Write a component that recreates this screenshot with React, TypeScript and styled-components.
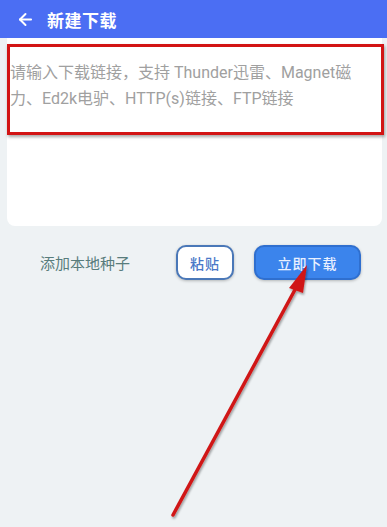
import React from 'react';
import styled, { createGlobalStyle } from 'styled-components';
import { ArrowLeft } from 'lucide-react';

const GlobalStyle = createGlobalStyle`
  body {
    margin: 0;
    font-family: Roboto, "Noto Sans CJK SC", sans-serif;
  }
`;

const Page = styled.div`
  position: relative;
  width: 387px;
  height: 527px;
  background: #eef2f4;
  overflow: hidden;
`;

const Header = styled.header`
  height: 38px;
  background: #4b6ef3;
  display: flex;
  align-items: center;
  gap: 12px;
  padding-left: 16px;
  color: #fff;
`;

const Title = styled.h1`
  margin: 0;
  font-size: 17px;
  font-weight: 700;
  letter-spacing: 0.5px;
`;

const Card = styled.div`
  position: relative;
  margin: 0 5px 0 7px;
  height: 188px;
  background: #fff;
  border-radius: 0 0 8px 8px;
  box-sizing: border-box;
  padding: 22px 0 0 3px;
`;

const LinkInput = styled.textarea`
  display: block;
  width: 100%;
  height: 150px;
  border: none;
  outline: none;
  resize: none;
  padding: 0;
  background: transparent;
  font-family: Roboto, "Noto Sans CJK SC", sans-serif;
  font-size: 16px;
  line-height: 26px;
  color: #333;

  &::placeholder {
    color: #a0a0a0;
  }
`;

const Highlight = styled.div`
  position: absolute;
  left: 0;
  right: -2px;
  top: 6px;
  height: 85px;
  border: 3px solid #d21414;
  box-shadow: 1px 2px 3px rgba(0, 0, 0, 0.35);
  pointer-events: none;
`;

const Actions = styled.div`
  display: flex;
  align-items: center;
  margin-top: 19px;
  height: 35px;
`;

const SeedLink = styled.span`
  margin-left: 40px;
  width: 136px;
  font-size: 15px;
  color: #587c7c;
`;

const Button = styled.button<{ $primary?: boolean }>`
  box-sizing: border-box;
  height: 35px;
  width: ${({ $primary }) => ($primary ? '107px' : '58px')};
  margin-right: ${({ $primary }) => ($primary ? '0' : '20px')};
  border-radius: 10px;
  border: 2px solid ${({ $primary }) => ($primary ? '#2f6fcf' : '#4a78b8')};
  background: ${({ $primary }) => ($primary ? '#3b84ec' : '#fff')};
  color: ${({ $primary }) => ($primary ? '#e8f0ff' : '#4a78c8')};
  font-family: Roboto, "Noto Sans CJK SC", sans-serif;
  font-size: 14px;
  font-weight: 500;
  letter-spacing: 1px;
  box-shadow: 0 1px 3px rgba(0, 0, 0, 0.25);
  padding: 0;
`;

const Pointer = styled.svg`
  position: absolute;
  left: 0;
  top: 0;
  pointer-events: none;
`;

const App: React.FC = () => (
  <Page>
    <GlobalStyle />
    <Header>
      <ArrowLeft size={19} strokeWidth={2.5} />
      <Title>新建下载</Title>
    </Header>
    <Card>
      <LinkInput placeholder="请输入下载链接，支持 Thunder迅雷、Magnet磁力、Ed2k电驴、HTTP(s)链接、FTP链接" />
      <Highlight />
    </Card>
    <Actions>
      <SeedLink>添加本地种子</SeedLink>
      <Button>粘贴</Button>
      <Button $primary>立即下载</Button>
    </Actions>
    <Pointer width="387" height="527" viewBox="0 0 387 527">
      <defs>
        <filter id="sh" x="-20%" y="-20%" width="140%" height="140%">
          <feDropShadow dx="1" dy="2" stdDeviation="1.2" floodOpacity="0.35" />
        </filter>
      </defs>
      <g filter="url(#sh)">
        <line x1="173" y1="515" x2="297" y2="286" stroke="#d01818" strokeWidth="3.5" strokeLinecap="round" />
        <polygon points="307,265 289,288 303,293" fill="#d01818" />
      </g>
    </Pointer>
  </Page>
);

export default App;
